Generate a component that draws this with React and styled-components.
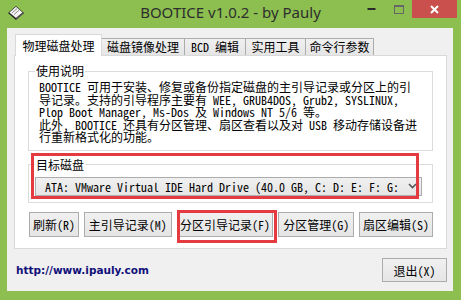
import styled, { createGlobalStyle } from "styled-components";

const UI_FONT = `"Noto Sans Mono CJK SC", "Noto Sans CJK SC", "Liberation Mono", monospace`;

const GlobalStyle = createGlobalStyle`
  html, body {
    margin: 0;
    padding: 0;
    background: #8cbf4f;
  }
`;

const Window = styled.div`
  position: relative;
  width: 461px;
  height: 300px;
  background: #8cbf4f;
  display: flex;
  flex-direction: column;
  overflow: hidden;
`;

const TitleBar = styled.div`
  height: 28px;
  display: grid;
  grid-template-columns: 1fr auto 1fr;
  align-items: start;
`;

const AppIcon = styled.div`
  padding: 5px 0 0 7px;
  line-height: 0;
`;

const Title = styled.div`
  font-family: "Noto Sans", "Open Sans", sans-serif;
  font-size: 15px;
  line-height: 25px;
  color: #2e2e2e;
  white-space: nowrap;
`;

const Controls = styled.div`
  justify-self: end;
  display: flex;
  margin-right: 4px;
`;

const CtrlButton = styled.div`
  width: ${({ $w }) => $w}px;
  height: 18px;
  display: flex;
  align-items: center;
  justify-content: center;
  background: ${({ $close }) => ($close ? "#c9504c" : "transparent")};
`;

const Client = styled.div`
  flex: 1;
  margin: 0 8px 9px 7px;
  background: #f0f0f0;
  display: flex;
  flex-direction: column;
  font-family: ${UI_FONT};
  font-size: 12px;
  color: #000;
`;

const TabArea = styled.div`
  margin: 6px 6px 0 7px;
  display: flex;
  flex-direction: column;
`;

const TabStrip = styled.div`
  height: 21px;
  display: flex;
  align-items: flex-end;
  padding-left: 1px;
`;

const Tab = styled.div`
  position: relative;
  z-index: ${({ $active }) => ($active ? 2 : 1)};
  width: ${({ $w }) => $w}px;
  height: ${({ $active }) => ($active ? 22 : 17)}px;
  margin-left: ${({ $first }) => ($first ? 0 : -1)}px;
  margin-bottom: ${({ $active }) => ($active ? -1 : 0)}px;
  box-sizing: border-box;
  border: 1px solid ${({ $active }) => ($active ? "#d9d9d9" : "#acacac")};
  border-bottom: none;
  background: ${({ $active }) =>
    $active ? "#fff" : "linear-gradient(#f0f0f0, #e5e5e5)"};
  display: flex;
  align-items: center;
  justify-content: center;
  line-height: 14px;
  white-space: nowrap;
`;

const Panel = styled.div`
  height: 194px;
  box-sizing: border-box;
  border: 1px solid #d9d9d9;
  background: #fff;
  padding: 8px 13px 0 13px;
  display: flex;
  flex-direction: column;
`;

const Group = styled.fieldset`
  margin: ${({ $gap }) => $gap || 0}px 0 0 0;
  padding: 0 10px 6px 6px;
  border: 1px solid #dcdcdc;
  min-width: 0;
`;

const Legend = styled.legend`
  padding: 0 1px;
  line-height: 14px;
`;

const Desc = styled.div`
  margin: 3px 0 0 4px;
  line-height: 12.5px;
  white-space: pre;
`;

const Combo = styled.div`
  margin-top: 5px;
  height: 19px;
  box-sizing: border-box;
  border: 1px solid #acacac;
  background: linear-gradient(#f0f0f0, #e5e5e5);
  display: flex;
  align-items: center;
  padding: 0 4px 0 9px;
  white-space: nowrap;
  overflow: hidden;
`;

const ComboText = styled.span`
  flex: 1;
  overflow: hidden;
`;

const ButtonRow = styled.div`
  margin: 9px 0 0 1px;
  display: flex;
  gap: 5px;
`;

const Button = styled.div`
  width: ${({ $w }) => $w}px;
  height: ${({ $h }) => $h || 25}px;
  box-sizing: border-box;
  border: 1px solid #acacac;
  background: linear-gradient(#f0f0f0, #e5e5e5);
  display: flex;
  align-items: center;
  justify-content: center;
  white-space: nowrap;
`;

const Footer = styled.div`
  flex: 1;
  display: flex;
  align-items: center;
  justify-content: space-between;
  padding: 0 6px 0 9px;
`;

const Link = styled.a`
  font-family: "DejaVu Sans", Verdana, sans-serif;
  font-weight: bold;
  font-size: 10.5px;
  color: #10107a;
  text-decoration: none;
`;

const Highlight = styled.div`
  position: absolute;
  box-sizing: border-box;
  border: 3px solid #e33b3f;
  pointer-events: none;
`;

const DiskIcon = () => (
  <svg width="18" height="16" viewBox="0 0 18 16">
    <polygon points="9,1 17,8 9,15 1,8" fill="#222" />
    <polygon points="9,1.8 15.6,7.6 9,13 2.4,7.6" fill="#f4f4f4" />
    <line x1="5" y1="8" x2="10" y2="3.6" stroke="#8a8a8a" strokeWidth="1" />
    <line x1="7" y1="9.6" x2="12" y2="5.2" stroke="#8a8a8a" strokeWidth="1" />
    <polygon points="9,13 15.6,7.6 17,8 9,15" fill="#555" />
  </svg>
);

const tabs = [
  { label: "物理磁盘处理", w: 87, active: true },
  { label: "磁盘镜像处理", w: 84 },
  { label: "BCD 编辑", w: 62 },
  { label: "实用工具", w: 61 },
  { label: "命令行参数", w: 69 },
];

const buttons = [
  { label: "刷新(R)", w: 50 },
  { label: "主引导记录(M)", w: 88 },
  { label: "分区引导记录(F)", w: 97 },
  { label: "分区管理(G)", w: 76 },
  { label: "扇区编辑(S)", w: 74 },
];

const description = [
  "BOOTICE 可用于安装、修复或备份指定磁盘的主引导记录或分区上的引",
  "导记录。支持的引导程序主要有 WEE, GRUB4DOS, Grub2, SYSLINUX,",
  "Plop Boot Manager, Ms-Dos 及 Windows NT 5/6 等。",
  "此外, BOOTICE 还具有分区管理、扇区查看以及对 USB 移动存储设备进",
  "行重新格式化的功能。",
].join("\n");

export default function App() {
  return (
    <Window>
      <GlobalStyle />
      <TitleBar>
        <AppIcon>
          <DiskIcon />
        </AppIcon>
        <Title>BOOTICE v1.0.2 - by Pauly</Title>
        <Controls>
          <CtrlButton $w={27}>
            <svg width="9" height="4" viewBox="0 0 9 4">
              <rect x="0.5" y="1" width="8" height="2" fill="#2a2a2a" />
            </svg>
          </CtrlButton>
          <CtrlButton $w={27}>
            <svg width="10" height="9" viewBox="0 0 10 9">
              <rect x="0.5" y="0.5" width="9" height="8" fill="none" stroke="#666" />
              <rect x="0.5" y="0.5" width="9" height="1.5" fill="#666" />
            </svg>
          </CtrlButton>
          <CtrlButton $w={45} $close>
            <svg width="9" height="9" viewBox="0 0 9 9">
              <path d="M1 1 L8 8 M8 1 L1 8" stroke="#fff" strokeWidth="2" />
            </svg>
          </CtrlButton>
        </Controls>
      </TitleBar>

      <Client>
        <TabArea>
          <TabStrip>
            {tabs.map((t, i) => (
              <Tab key={t.label} $w={t.w} $active={t.active} $first={i === 0}>
                {t.label}
              </Tab>
            ))}
          </TabStrip>
          <Panel>
            <Group>
              <Legend>使用说明</Legend>
              <Desc>{description}</Desc>
            </Group>
            <Group $gap={7}>
              <Legend>目标磁盘</Legend>
              <Combo>
                <ComboText>
                  ATA: VMware Virtual IDE Hard Drive (40.0 GB, C: D: E: F: G:
                </ComboText>
                <svg width="9" height="6" viewBox="0 0 9 6">
                  <path d="M1 1 L4.5 4.5 L8 1" fill="none" stroke="#555" strokeWidth="1.6" />
                </svg>
              </Combo>
            </Group>
            <ButtonRow>
              {buttons.map((b) => (
                <Button key={b.label} $w={b.w}>
                  {b.label}
                </Button>
              ))}
            </ButtonRow>
          </Panel>
        </TabArea>
        <Footer>
          <Link href="#">http://www.ipauly.com</Link>
          <Button $w={65} $h={24}>
            退出(X)
          </Button>
        </Footer>
      </Client>

      <Highlight style={{ left: 31, top: 153, width: 388, height: 46 }} />
      <Highlight style={{ left: 177, top: 210, width: 100, height: 33 }} />
    </Window>
  );
}
